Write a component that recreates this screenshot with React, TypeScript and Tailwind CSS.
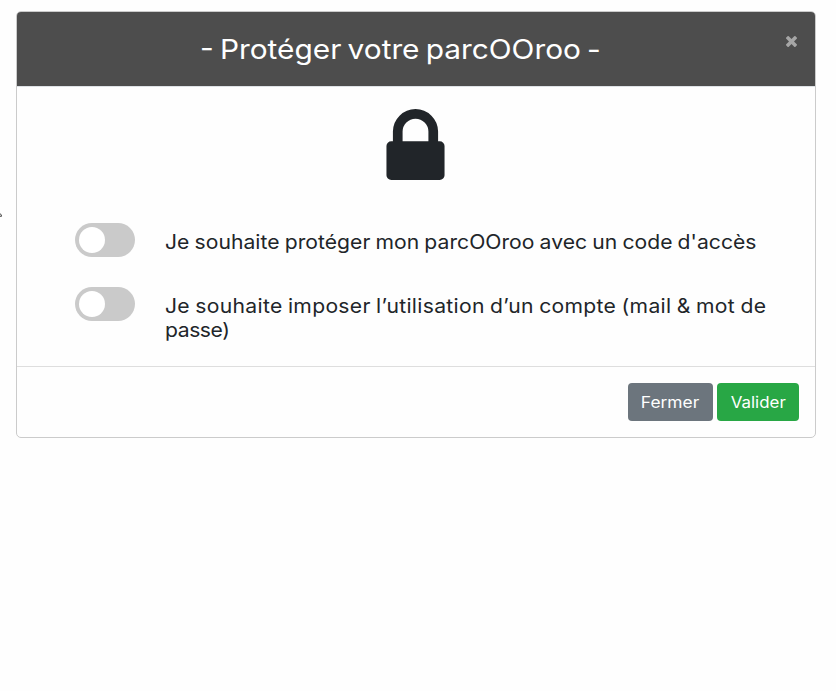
import { useState } from "react";

function LockIcon() {
  return (
    <svg viewBox="0 128 1152 1408" className="h-[71px] w-[59px]" fill="currentColor" aria-hidden="true">
      <path d="M320 768h512V576q0-106-75-181t-181-75-181 75-75 181v192zm832 96v576q0 40-28 68t-68 28H96q-40 0-68-28T0 1440V864q0-40 28-68t68-28h32V576q0-184 132-316T576 128t316 132 132 316v192h32q40 0 68 28t28 68z" />
    </svg>
  );
}

function CloseIcon() {
  return (
    <svg viewBox="302 366 1188 1188" className="size-[11px]" fill="currentColor" aria-hidden="true">
      <path d="M1490 1322q0 40-28 68l-136 136q-28 28-68 28t-68-28l-294-294-294 294q-28 28-68 28t-68-28l-136-136q-28-28-28-68t28-68l294-294-294-294q-28-28-28-68t28-68l136-136q28-28 68-28t68 28l294 294 294-294q28-28 68-28t68 28l136 136q28 28 28 68t-28 68l-294 294 294 294q28 28 28 68z" />
    </svg>
  );
}

type SwitchProps = {
  checked: boolean;
  label: string;
  onChange: (checked: boolean) => void;
};

function Switch({ checked, label, onChange }: SwitchProps) {
  return (
    <button
      type="button"
      role="switch"
      aria-checked={checked}
      aria-label={label}
      onClick={() => onChange(!checked)}
      className={`flex h-[34px] w-[60px] shrink-0 items-center rounded-full px-1 ${
        checked ? "justify-end bg-[#28a745]" : "bg-[#cacaca]"
      }`}
    >
      <span className="size-[26px] rounded-full bg-white" />
    </button>
  );
}

export default function App() {
  const [withCode, setWithCode] = useState(false);
  const [withAccount, setWithAccount] = useState(false);

  return (
    <div className="relative h-[691px] w-[836px] overflow-hidden bg-[#fefefe] px-4 pt-[11px] font-['Inter',sans-serif] text-[#212529]">
      {/* end of the page text that sticks out behind the dialog */}
      <svg viewBox="0 0 3 5" className="absolute top-[213px] left-0 h-[5px] w-[3px]" aria-hidden="true">
        <path d="M0 .8Q1.5 1 1.5 3.3H0" fill="none" stroke="#444" strokeWidth="1" />
      </svg>

      <div className="flex h-[427px] w-[800px] flex-col overflow-hidden rounded-[5px] border border-[#cbcbcb]">
        <header className="flex h-[75px] shrink-0 border-b border-[#dee2e6] bg-[#4d4d4d] text-white">
          <h3 className="flex-1 pt-[17px] pl-[183px] text-[27px] leading-[42px] whitespace-nowrap [word-spacing:-2px]">
            <span className="inline-block origin-left scale-x-[1.105]">- Protéger votre parcOOroo -</span>
          </h3>
          <button type="button" aria-label="Fermer" className="mt-[24px] mr-[18px] size-[11px] text-[#a6a6a6]">
            <CloseIcon />
          </button>
        </header>

        <div className="flex-1 pt-[22px] pl-[58px]">
          <div className="flex w-[681px] justify-center text-[#212529]">
            <LockIcon />
          </div>

          <div className="mt-[43px] flex h-16">
            <Switch checked={withCode} label="Code d'accès" onChange={setWithCode} />
            <p className="ml-[30px] origin-left scale-x-[1.082] pt-[7px] text-[19.5px] leading-6 tracking-[0.04px] whitespace-nowrap [word-spacing:-0.8px]">
              Je souhaite protéger mon parcOOroo avec un code d'accès
            </p>
          </div>

          <div className="flex">
            <Switch checked={withAccount} label="Compte" onChange={setWithAccount} />
            <p className="ml-[30px] origin-left scale-x-[1.083] pt-[7px] text-[19.5px] leading-6 tracking-[0.28px] whitespace-nowrap [word-spacing:-0.8px]">
              Je souhaite imposer l’utilisation d’un compte (mail &amp; mot de
              <br />
              <span className="tracking-[-0.4px]">passe)</span>
            </p>
          </div>
        </div>

        <footer className="flex h-[71px] shrink-0 justify-end gap-1 border-t border-[#dedede] px-4 pt-4">
          <button type="button" className="h-[38px] w-[85px] rounded-[4px] bg-[#6c757d] pt-[2px] text-[15.5px] text-white">
            <span className="inline-block scale-x-[1.12]">Fermer</span>
          </button>
          <button type="button" className="h-[38px] w-[82px] rounded-[4px] bg-[#28a745] pt-[2px] text-[15.5px] text-white">
            <span className="inline-block scale-x-[1.09]">Valider</span>
          </button>
        </footer>
      </div>
    </div>
  );
}
